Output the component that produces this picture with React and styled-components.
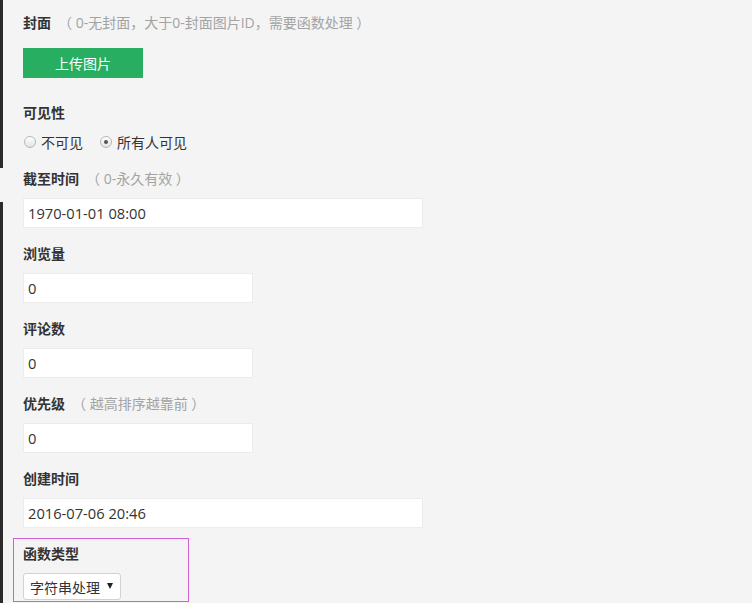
import React from "react";
import styled, { createGlobalStyle } from "styled-components";

const Global = createGlobalStyle`
  html, body { margin: 0; padding: 0; background: #f4f4f4; }
  body {
    font-family: "Open Sans", "Noto Sans CJK SC", sans-serif;
    font-size: 14px;
    color: #333;
    overflow: hidden;
  }
`;

const Page = styled.div`
  display: flex;
  width: 752px;
  height: 603px;
  background: #f4f4f4;
  overflow: hidden;
`;

const Edge = styled.div`
  display: flex;
  flex-direction: column;
  gap: 34px;
  width: 3px;
  flex-shrink: 0;
`;

const EdgeSegment = styled.div`
  width: 3px;
  height: ${(p) => p.$h};
  flex-shrink: 0;
  background: #2b2b2b;
`;

const Content = styled.div`
  display: flex;
  flex-direction: column;
  padding: 12px 0 0 20px;
`;

const Group = styled.div`
  display: flex;
  flex-direction: column;
  align-items: flex-start;
  margin-bottom: ${(p) => p.$mb ?? "15px"};
`;

const Label = styled.div`
  font-family: "Noto Sans CJK SC", sans-serif;
  font-weight: bold;
  font-size: 14px;
  line-height: 20px;
  height: 20px;
  color: #333;
  margin-bottom: ${(p) => p.$mb ?? "10px"};
  white-space: nowrap;
`;

const Hint = styled.span`
  font-family: "Open Sans", "Noto Sans CJK SC", sans-serif;
  font-weight: normal;
  color: #a3a3a3;
  margin-left: 7px;
  white-space: pre;
`;

const UploadButton = styled.button`
  width: 120px;
  height: 30px;
  border: none;
  background: #27ae60;
  color: #fff;
  font-family: "Noto Sans CJK SC", sans-serif;
  font-size: 14px;
  padding: 0;
  cursor: pointer;
`;

const RadioRow = styled.div`
  display: flex;
  align-items: center;
  height: 20px;
  gap: 16px;
`;

const RadioOption = styled.label`
  display: flex;
  align-items: center;
  gap: 5px;
  font-family: "Noto Sans CJK SC", sans-serif;
  font-size: 14px;
  color: #333;
`;

const RadioDot = styled.span`
  box-sizing: border-box;
  width: 12px;
  height: 12px;
  border-radius: 50%;
  border: 1px solid #b8b8b8;
  background: linear-gradient(#ffffff, #e2e2e2);
  display: flex;
  align-items: center;
  justify-content: center;
  margin-left: 1px;
  &::after {
    content: "";
    width: 4px;
    height: 4px;
    border-radius: 50%;
    background: ${(p) => (p.$checked ? "#555" : "transparent")};
  }
`;

const TextInput = styled.input`
  box-sizing: border-box;
  width: ${(p) => p.$w};
  height: 30px;
  border: 1px solid #ececec;
  background: #fff;
  padding: 0 4px;
  font-family: "Open Sans", "Noto Sans CJK SC", sans-serif;
  font-size: 14.7px;
  color: #333;
  outline: none;
`;

const Highlight = styled.div`
  box-sizing: border-box;
  width: 176px;
  height: 64px;
  margin-left: -10px;
  padding: 4px 0 0 9px;
  border: 1px solid #d35fd8;
  display: flex;
  flex-direction: column;
  align-items: flex-start;
`;

const SelectBox = styled.div`
  box-sizing: border-box;
  display: flex;
  align-items: center;
  justify-content: space-between;
  width: 98px;
  height: 27px;
  padding: 0 7px 0 6px;
  background: #fff;
  border: 1px solid #d2d2d2;
  border-radius: 3px;
  font-family: "Noto Sans CJK SC", sans-serif;
  font-size: 14px;
  color: #333;
`;

const Caret = styled.span`
  width: 0;
  height: 0;
  border-left: 3px solid transparent;
  border-right: 3px solid transparent;
  border-top: 6px solid #222;
  margin-top: -2px;
`;

export default function App() {
  return (
    <>
      <Global />
      <Page>
        <Edge>
          <EdgeSegment $h="168px" />
          <EdgeSegment $h="420px" />
        </Edge>
        <Content>
          <Group $mb="24px">
            <Label $mb="16px">
              封面<Hint>（ 0-无封面，大于0-封面图片ID，需要函数处理 ）</Hint>
            </Label>
            <UploadButton>上传图片</UploadButton>
          </Group>
          <Group $mb="16px">
            <Label>可见性</Label>
            <RadioRow>
              <RadioOption>
                <RadioDot />
                不可见
              </RadioOption>
              <RadioOption>
                <RadioDot $checked />
                所有人可见
              </RadioOption>
            </RadioRow>
          </Group>
          <Group>
            <Label>
              截至时间<Hint>（ 0-永久有效 ）</Hint>
            </Label>
            <TextInput $w="400px" defaultValue="1970-01-01 08:00" />
          </Group>
          <Group>
            <Label>浏览量</Label>
            <TextInput $w="230px" defaultValue="0" />
          </Group>
          <Group>
            <Label>评论数</Label>
            <TextInput $w="230px" defaultValue="0" />
          </Group>
          <Group>
            <Label>
              优先级<Hint>（ 越高排序越靠前 ）</Hint>
            </Label>
            <TextInput $w="230px" defaultValue="0" />
          </Group>
          <Group $mb="10px">
            <Label>创建时间</Label>
            <TextInput $w="400px" defaultValue="2016-07-06 20:46" />
          </Group>
          <Highlight>
            <Label>函数类型</Label>
            <SelectBox>
              <span>字符串处理</span>
              <Caret />
            </SelectBox>
          </Highlight>
        </Content>
      </Page>
    </>
  );
}
